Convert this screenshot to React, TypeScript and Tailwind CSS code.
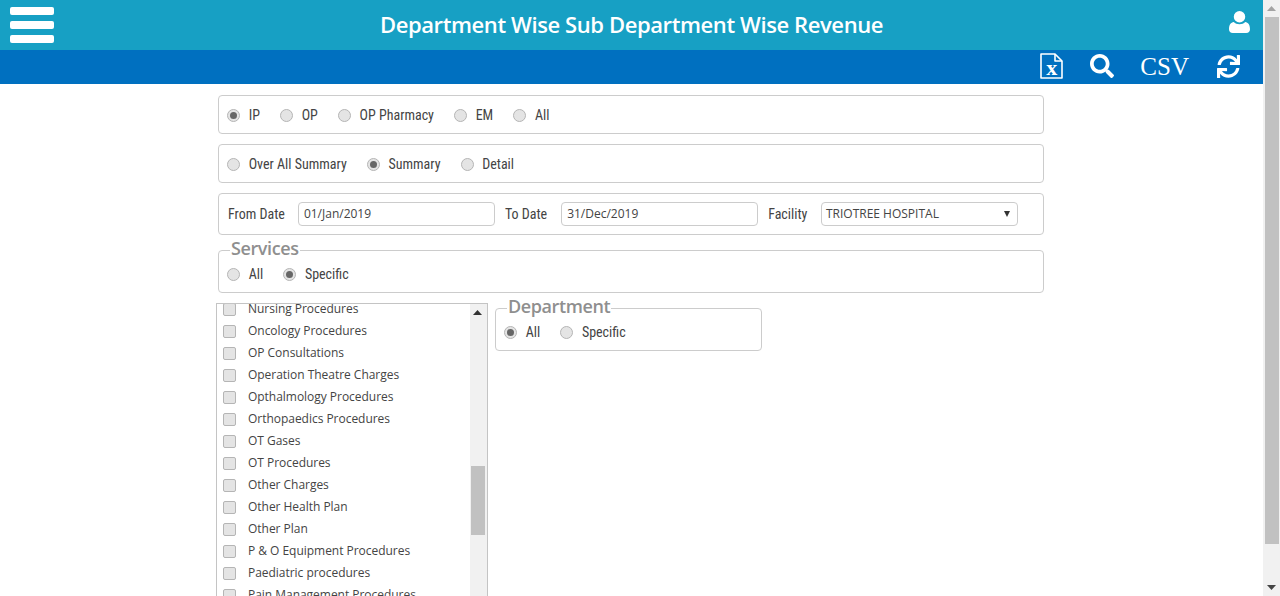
import { FaSearch, FaSync } from "react-icons/fa";

const cond = "font-['Roboto'] text-[14px] text-[#444] [font-stretch:condensed]";

function Radio({ label, checked }: { label: string; checked?: boolean }) {
  return (
    <span className="mr-[20px] flex items-center">
      <span className="flex h-[13px] w-[13px] items-center justify-center rounded-full border border-[#b5b5b5] bg-[#e4e4e4]">
        {checked && <span className="h-[7px] w-[7px] rounded-full bg-[#666]" />}
      </span>
      <span className={`ml-[8.7px] ${cond}`}>{label}</span>
    </span>
  );
}

function Box({ children, className = "" }: { children: React.ReactNode; className?: string }) {
  return <div className={`flex items-center rounded-[4px] border border-[#ccc] ${className}`}>{children}</div>;
}

function Field({ label, value, gap }: { label: string; value: string; gap: string }) {
  return (
    <>
      <span className={`${cond} ${gap}`}>{label}</span>
      <span className="mr-[10px] flex h-[24px] w-[197px] items-center rounded-[4px] border border-[#ccc] pl-[5px] font-['Open_Sans'] text-[12px] text-[#444]">{value}</span>
    </>
  );
}

function ExcelIcon() {
  return (
    <span className="relative block h-[26px] w-[23px]">
      <svg width="23" height="26" viewBox="0 0 23 26" fill="none" stroke="white" strokeWidth="1.6" className="absolute inset-0">
        <path d="M1 1h14l7 7v17H1z" strokeLinejoin="round" />
        <path d="M15 1v7h7" strokeLinejoin="round" />
      </svg>
      <span className="absolute left-0 right-0 top-[5px] text-center font-['Liberation_Serif'] text-[22px] font-bold leading-[20px] text-white">x</span>
    </span>
  );
}

function UserIcon() {
  return (
    <svg width="21" height="22" viewBox="0 0 22 23" fill="white" className="absolute right-[13px] top-[11px]">
      <circle cx="11" cy="6" r="6" />
      <path d="M5 11.500c1.500 1.500 3.500 2.300 6 2.300s4.500-.8 6-2.300c3 .3 5 3 5 7.500 0 2.500-1.500 4-4 4H4c-2.500 0-4-1.500-4-4 0-4.500 2-7.200 5-7.500z" />
    </svg>
  );
}

const items = [
  "Oncology Procedures",
  "OP Consultations",
  "Operation Theatre Charges",
  "Opthalmology Procedures",
  "Orthopaedics Procedures",
  "OT Gases",
  "OT Procedures",
  "Other Charges",
  "Other Health Plan",
  "Other Plan",
  "P & O Equipment Procedures",
  "Paediatric procedures",
  "Pain Management Procedures",
];

function Item({ label }: { label: string }) {
  return (
    <div className="flex h-[22px] shrink-0 items-center pl-[6px]">
      <span className="h-[13px] w-[13px] rounded-[2px] border border-[#b5b5b5] bg-[#e4e4e4]" />
      <span className="ml-[12px] whitespace-nowrap font-['Open_Sans'] text-[12px] tracking-[-0.03px] text-[#444]">{label}</span>
    </div>
  );
}

function Triangle({ dir, color = "#555" }: { dir: "up" | "down"; color?: string }) {
  return (
    <svg width="9" height="5" viewBox="0 0 9 5" fill={color}>
      <path d={dir === "up" ? "M4.500 0L9 5H0z" : "M0 0h9L4.500 5z"} />
    </svg>
  );
}

const legend = "ml-[3px] px-[1px] pb-[4px] font-['Open_Sans'] text-[18px] font-semibold leading-[24px] tracking-[-0.4px] text-[#8f8f8f]";

export default function App() {
  return (
    <div className="flex h-[596px] w-[1280px] overflow-hidden bg-white">
      <div className="w-[1263px] shrink-0">
        <header className="relative flex h-[50px] items-center justify-center bg-[#17a0c4]">
          <div className="absolute left-[10px] top-[7px] flex flex-col gap-[6px]">
            <span className="h-[8px] w-[44px] rounded-[2px] bg-white" />
            <span className="h-[8px] w-[44px] rounded-[2px] bg-white" />
            <span className="h-[8px] w-[44px] rounded-[2px] bg-white" />
          </div>
          <h1 className="-mt-[2px] font-['Open_Sans'] text-[22px] font-semibold tracking-[-0.4px] text-white">Department Wise Sub Department Wise Revenue</h1>
          <UserIcon />
        </header>
        <div className="flex h-[34px] items-center justify-end bg-[#0070c0] pb-[2px] pr-[23px] text-white">
          <ExcelIcon />
          <FaSearch size={24} className="ml-[27px]" />
          <span className="ml-[26px] mr-[1px] font-['Liberation_Serif'] text-[25px] leading-none">CSV</span>
          <FaSync size={23} className="ml-[27px]" />
        </div>

        <main className="ml-[218px] w-[826px] pt-[11px]">
          <Box className="h-[39px] pl-[8px] pt-[1px]">
            <Radio label="IP" checked />
            <Radio label="OP" />
            <Radio label="OP Pharmacy" />
            <Radio label="EM" />
            <Radio label="All" />
          </Box>
          <Box className="mt-[10px] h-[39px] pl-[8px] pt-[1px]">
            <Radio label="Over All Summary" />
            <Radio label="Summary" checked />
            <Radio label="Detail" />
          </Box>
          <Box className="mt-[10px] h-[42px] pl-[9px]">
            <Field label="From Date" value="01/Jan/2019" gap="mr-[13px]" />
            <Field label="To Date" value="31/Dec/2019" gap="mr-[14px]" />
            <span className={`${cond} mr-[14px]`}>Facility</span>
            <span className="flex h-[24px] w-[197px] items-center justify-between rounded-[4px] border border-[#ccc] pl-[3.500px] pr-[7px] font-['Open_Sans'] text-[12px] text-[#444]">
              TRIOTREE HOSPITAL
              <svg width="6" height="6" viewBox="0 0 7 7" fill="#333"><path d="M0 0h7L3.500 7z" /></svg>
            </span>
          </Box>
          <fieldset className="mt-[1px] h-[57px] rounded-[4px] border border-[#ccc] pl-[8px]">
            <legend className={legend}>Services</legend>
            <div className="flex items-center">
              <Radio label="All" />
              <Radio label="Specific" checked />
            </div>
          </fieldset>
        </main>

        <section className="ml-[216px] mt-[10px] flex items-start">
          <div className="flex h-[293px] w-[272px] overflow-hidden border border-b-0 border-[#c4c4c4]">
            <div className="flex w-[253px] flex-col overflow-hidden">
              <div className="-mt-[6px]">
                <Item label="Nursing Procedures" />
              </div>
              {items.map((item) => (
                <Item key={item} label={item} />
              ))}
            </div>
            <div className="relative flex-1 bg-[#f1f1f1]">
              <span className="absolute left-[3px] top-[6px] flex"><Triangle dir="up" color="#333" /></span>
              <span className="absolute left-[1px] top-[162px] h-[69px] w-[14px] bg-[#c1c1c1]" />
            </div>
          </div>
          <fieldset className="ml-[7px] mt-[-9px] h-[57px] w-[267px] rounded-[4px] border border-[#ccc] pl-[8px]">
            <legend className={legend}>Department</legend>
            <div className="flex items-center">
              <Radio label="All" checked />
              <Radio label="Specific" />
            </div>
          </fieldset>
        </section>
      </div>
      <aside className="relative w-[17px] shrink-0 bg-[#f1f1f1]">
        <span className="absolute left-[4px] top-[6px] flex"><Triangle dir="up" color="#a3a3a3" /></span>
        <span className="absolute left-[2px] top-[17px] h-[527px] w-[14px] bg-[#c1c1c1]" />
        <span className="absolute bottom-[6px] left-[4px] flex"><Triangle dir="down" color="#444" /></span>
      </aside>
    </div>
  );
}
